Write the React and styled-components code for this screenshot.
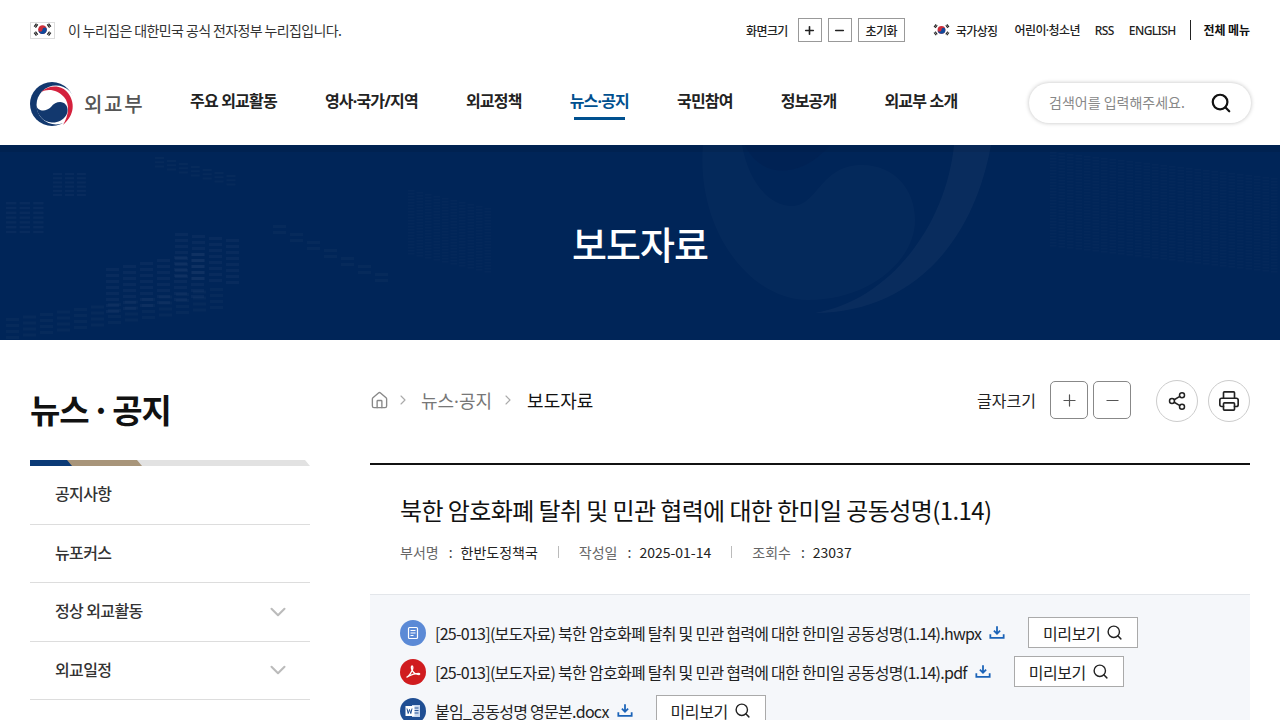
import styled, { createGlobalStyle } from "styled-components";
import { ChevronDown, ChevronRight, House, Minus, Plus, Printer, Search, Share2 } from "lucide-react";

const GlobalStyle = createGlobalStyle`
  html, body {
    margin: 0;
    height: 720px;
    overflow: hidden;
    background: #fff;
    color: #111;
    font-family: "Noto Sans CJK KR", "Noto Sans", sans-serif;
  }
  * { box-sizing: border-box; }
`;

// the middle dot in these labels is the narrow latin one
const narrowDot = `"Noto Sans", "Noto Sans CJK KR", sans-serif`;

const utilLinks = ["어린이·청소년", "RSS", "ENGLISH"];
const navItems = ["주요 외교활동", "영사·국가/지역", "외교정책", "뉴스·공지", "국민참여", "정보공개", "외교부 소개"];
const sideItems = [
  { label: "공지사항" },
  { label: "뉴포커스" },
  { label: "정상 외교활동", more: true },
  { label: "외교일정", more: true },
];
const files = [
  { kind: "hwp", name: "[25-013](보도자료) 북한 암호화폐 탈취 및 민관 협력에 대한 한미일 공동성명(1.14).hwpx" },
  { kind: "pdf", name: "[25-013](보도자료) 북한 암호화폐 탈취 및 민관 협력에 대한 한미일 공동성명(1.14).pdf" },
  { kind: "doc", name: "붙임_공동성명 영문본.docx" },
];

// dash patches of the hero backdrop: x, y, columns, rows, slant, size, strength
const patches = [
  [6, 202, 3, 7, 0, 0.8, 0.03], [53, 173, 3, 6, 0, 0.7, 0.03], [155, 157, 7, 3, 3, 0.7, 0.025],
  [175, 233, 4, 8, 2, 1, 0.03], [106, 268, 6, 8, -3, 1, 0.03], [6, 318, 13, 4, -2.5, 1, 0.025],
  [273, 225, 7, 2, 8, 1, 0.025], [408, 190, 10, 22, 2, 0.5, 0.015], [1050, 152, 27, 32, 1, 0.5, 0.016],
];

function HeroDashes() {
  return patches.map(([x, y, cols, rows, slant, size, strength], p) =>
    Array.from({ length: cols * rows }, (_, i) => {
      const col = i % cols;
      const row = Math.floor(i / cols);
      return (
        <rect
          key={`${p}-${i}`}
          x={x + col * 17 * size}
          y={y + row * 6 * size + col * slant}
          width={13 * size}
          height={3 * size}
          fill="#fff"
          opacity={strength}
        />
      );
    }),
  );
}

function HeroArt() {
  return (
    <HeroSvg viewBox="0 0 1280 195" aria-hidden="true">
      <g transform="translate(0 -145)">
        <HeroDashes />
        <rect y="145" width="1280" height="7" fill="#001f4a" opacity="0.5" />
        <path d="M815 313C905 313 972 250 991 145H954C946 225 890 300 815 313Z" fill="#fff" opacity="0.035" />
        <path d="M703 145C696 230 750 300 808 300C870 300 915 260 915 220C915 190 895 165 862 165C820 165 818 206 792 206C768 206 748 180 742 145Z" fill="#fff" opacity="0.016" stroke="#fff" strokeOpacity="0.03" />
        <path d="M745 145C760 178 800 180 830 145Z" fill="#001e4d" opacity="0.35" />
      </g>
    </HeroSvg>
  );
}

function Flag({ width = 17 }) {
  return (
    <svg width={width} height={width * 0.8} viewBox="0 0 20 16" aria-hidden="true">
      <circle cx="10" cy="8" r="4.600" fill="#cd2e3a" />
      <path d="M5.400 8a2.300 2.300 0 0 0 4.600 0 2.300 2.300 0 0 1 4.600 0 4.600 4.600 0 0 1-9.200 0Z" fill="#0f4a9c" />
      <path
        d="M3.600 1.600 1.200 4.800M5 2.600 2.600 5.800M16.400 1.600l2.400 3.200M15 2.600l2.400 3.200M3.600 14.400 1.200 11.200M5 13.400 2.600 10.200M16.400 14.400l2.400-3.200M15 13.400l2.400-3.200"
        stroke="#222"
        strokeWidth="1.300"
      />
    </svg>
  );
}

function Logo() {
  return (
    <svg width="46" height="46" viewBox="0 0 46 46" aria-hidden="true">
      <circle cx="22" cy="23" r="22" fill="#12386e" />
      <circle cx="26" cy="24" r="19.500" fill="#fff" />
      <path d="M11 11C20 3 32 4 38 12C45 21 45 34 33 44C39 34 40 23 34 16C28 9 18 7 11 11Z" fill="#d4213d" />
      <path d="M6 24C8 31 16 31 21 26C25 21 32 19 36 24C41 31 34 42 22 41.500C13 41 7 34 6 24Z" fill="#12386e" />
    </svg>
  );
}

function DownloadIcon() {
  return (
    <DownIcon viewBox="0 0 18 16" aria-hidden="true">
      <path d="M9 1v8M5.500 6 9 9.500 12.500 6" fill="none" stroke="#1a63b8" strokeWidth="2" />
      <path d="M1.500 10v4h15v-4" fill="none" stroke="#1a63b8" strokeWidth="2" />
    </DownIcon>
  );
}

function FileBadge({ kind }) {
  return (
    <FileCircle $kind={kind}>
      <svg width="26" height="26" viewBox="0 0 26 26" aria-hidden="true">
        {kind === "hwp" && (
          <g fill="none" stroke="#fff" strokeWidth="1.200">
            <rect x="8.500" y="7.500" width="9" height="11" rx="1" />
            <path d="M10.500 10.500h5M10.500 13h5M10.500 15.500h3" />
          </g>
        )}
        {kind === "pdf" && (
          <path d="M7 18c2-1 4-4 5.500-7.500.6-1.600.4-3.500-.4-3.500-1 0-1 2.500.2 4.500 1.300 2.300 3.500 4 6.700 4 1 0 1-1-.5-1-3 0-7 1-9.500 2.500-1.200.7-2.500 1.200-2 1Z" fill="none" stroke="#fff" strokeWidth="1.300" />
        )}
        {kind === "doc" && (
          <g>
            <rect x="12" y="7" width="8" height="12" fill="#c9d8ef" />
            <path d="M13.500 10h5M13.500 12.500h5M13.500 15h5" stroke="#2b5797" />
            <rect x="5.500" y="8" width="9" height="10" fill="#fff" />
            <path d="m7 10.500 1.200 5 1.300-4 1.300 4 1.200-5" fill="none" stroke="#1f4e93" strokeWidth="1" />
          </g>
        )}
      </svg>
    </FileCircle>
  );
}

export default function App() {
  return (
    <>
      <GlobalStyle />
      <TopBar>
        <Notice>
          <FlagFrame>
            <Flag width={19} />
          </FlagFrame>
          이 누리집은 대한민국 공식 전자정부 누리집입니다.
        </Notice>
        <Utilities>
          <ZoomLabel>화면크기</ZoomLabel>
          <TinyButton aria-label="확대"><Plus size={13} strokeWidth={3} /></TinyButton>
          <TinyButton aria-label="축소"><Minus size={13} strokeWidth={3} /></TinyButton>
          <ResetButton>초기화</ResetButton>
          <SymbolLink>
            <Flag />
            국가상징
          </SymbolLink>
          {utilLinks.map((link) => (
            <UtilLink key={link}>{link}</UtilLink>
          ))}
          <AllMenu>전체 메뉴</AllMenu>
        </Utilities>
      </TopBar>

      <Header>
        <Brand>
          <Logo />
          <BrandName>외교부</BrandName>
        </Brand>
        <Nav>
          {navItems.map((item) => (
            <NavItem key={item} $active={item === "뉴스·공지"}>{item}</NavItem>
          ))}
        </Nav>
        <SearchBox>
          <SearchText>검색어를 입력해주세요.</SearchText>
          <Search size={22} strokeWidth={2.4} color="#111" />
        </SearchBox>
      </Header>

      <Hero>
        <HeroArt />
        <HeroTitle>보도자료</HeroTitle>
      </Hero>

      <Body>
        <Sidebar>
          <SideTitle>뉴스 · 공지</SideTitle>
          <SideBand>
            <BandPart $width={280} $color="#e2e2e2" />
            <BandPart $width={112} $color="#a8957a" />
            <BandPart $width={42} $color="#0b3a76" />
          </SideBand>
          <SideList>
            {sideItems.map((item) => (
              <SideItem key={item.label}>
                <span>{item.label}</span>
                {item.more && <ChevronDown size={26} color="#bbb" strokeWidth={1.9} />}
              </SideItem>
            ))}
          </SideList>
        </Sidebar>

        <Main>
          <Toolbar>
            <Crumbs>
              <House size={19} color="#888" strokeWidth={1.7} />
              <ChevronRight size={16} color="#aaa" strokeWidth={1.7} />
              <CrumbLink>뉴스·공지</CrumbLink>
              <ChevronRight size={16} color="#aaa" strokeWidth={1.7} />
              <CrumbCurrent>보도자료</CrumbCurrent>
            </Crumbs>
            <Tools>
              <FontLabel>글자크기</FontLabel>
              <FontButton aria-label="글자 확대"><Plus size={19} strokeWidth={1.5} color="#555" /></FontButton>
              <FontButton aria-label="글자 축소"><Minus size={19} strokeWidth={1.5} color="#555" /></FontButton>
              <RoundButton aria-label="공유"><Share2 size={20} strokeWidth={1.8} color="#222" /></RoundButton>
              <RoundButton aria-label="인쇄"><Printer size={22} strokeWidth={1.8} color="#222" /></RoundButton>
            </Tools>
          </Toolbar>

          <Article>
            <ArticleHead>
              <ArticleTitle>북한 암호화폐 탈취 및 민관 협력에 대한 한미일 공동성명(1.14)</ArticleTitle>
              <Meta>
                <MetaItem><MetaKey>부서명</MetaKey><MetaColon>:</MetaColon>한반도정책국</MetaItem>
                <MetaItem><MetaKey>작성일</MetaKey><MetaColon>:</MetaColon>2025-01-14</MetaItem>
                <MetaItem><MetaKey>조회수</MetaKey><MetaColon>:</MetaColon>23037</MetaItem>
              </Meta>
            </ArticleHead>
            <FilePanel>
              {files.map((file) => (
                <FileRow key={file.kind}>
                  <FileBadge kind={file.kind} />
                  <FileName>{file.name}</FileName>
                  <DownloadIcon />
                  <PreviewButton>
                    미리보기
                    <Search size={17} strokeWidth={2} color="#222" />
                  </PreviewButton>
                </FileRow>
              ))}
            </FilePanel>
          </Article>
        </Main>
      </Body>
    </>
  );
}

const TopBar = styled.div`
  display: flex;
  align-items: center;
  justify-content: space-between;
  height: 60px;
  padding: 0 30px;
`;

const Notice = styled.div`
  display: flex;
  align-items: center;
  gap: 13px;
  font-size: 14px;
  letter-spacing: -0.62px;
  color: #333;
`;

const FlagFrame = styled.span`
  display: flex;
  align-items: center;
  justify-content: center;
  width: 25px;
  height: 17px;
  border: 1px solid #ddd;
`;

const Utilities = styled.div`
  display: flex;
  align-items: center;
  font-size: 12px;
  letter-spacing: -0.6px;
  font-weight: 500;
  color: #222;
`;

const ZoomLabel = styled.span`
  margin-right: 10px;
`;

const TinyButton = styled.button`
  display: flex;
  align-items: center;
  justify-content: center;
  width: 24px;
  height: 24px;
  margin-right: 6px;
  padding: 0;
  background: #fff;
  border: 1px solid #999;
  color: #222;
`;

const ResetButton = styled.button`
  width: 47px;
  height: 24px;
  padding: 0;
  background: #fff;
  border: 1px solid #999;
  font: inherit;
  letter-spacing: inherit;
  color: inherit;
`;

const SymbolLink = styled.a`
  display: flex;
  align-items: center;
  gap: 6px;
  margin: 0 2px 0 28px;
`;

const UtilLink = styled.a`
  margin-left: 15px;
  font-family: ${narrowDot};
`;

const AllMenu = styled.a`
  margin-left: 14px;
  padding-left: 13px;
  border-left: 1px solid #222;
  line-height: 20px;
  font-weight: 700;
  letter-spacing: -0.1px;
  color: #111;
`;

const Header = styled.header`
  display: flex;
  align-items: center;
  height: 85px;
  padding: 0 29px 0 30px;
`;

const Brand = styled.div`
  display: flex;
  align-items: center;
  gap: 8px;
  width: 160px;
  margin-top: 2px;
`;

const BrandName = styled.span`
  font-size: 20px;
  font-weight: 500;
  letter-spacing: 1.7px;
  color: #555;
`;

const Nav = styled.nav`
  display: flex;
  gap: 48px;
  flex: 1;
  margin-bottom: 3px;
`;

const NavItem = styled.a`
  position: relative;
  font-family: ${narrowDot};
  font-size: 16px;
  font-weight: 700;
  letter-spacing: -0.8px;
  line-height: 24px;
  color: ${({ $active }) => ($active ? "#00508f" : "#222")};

  &::after {
    content: "";
    display: ${({ $active }) => ($active ? "block" : "none")};
    position: absolute;
    left: 4px;
    right: 4px;
    bottom: -7px;
    height: 3px;
    background: #00508f;
  }
`;

const SearchBox = styled.div`
  display: flex;
  align-items: center;
  justify-content: space-between;
  width: 222px;
  height: 40px;
  padding: 0 19px 0 20px;
  border-radius: 20px;
  background: #fff;
  box-shadow: 0 0 4px rgba(0, 0, 0, 0.25);
`;

const SearchText = styled.span`
  margin-bottom: 1px;
  font-size: 14px;
  color: #888;
`;

const Hero = styled.section`
  position: relative;
  display: flex;
  align-items: center;
  justify-content: center;
  height: 195px;
  background: #002558;
  overflow: hidden;
`;

const HeroSvg = styled.svg`
  position: absolute;
  inset: 0;
  width: 100%;
  height: 100%;
`;

const HeroTitle = styled.h1`
  position: relative;
  margin: 0;
  font-size: 38px;
  font-weight: 500;
  letter-spacing: -1px;
  color: #fff;
`;

const Body = styled.div`
  display: flex;
  gap: 60px;
  padding: 40px 30px 0;
`;

const Sidebar = styled.aside`
  width: 280px;
  flex: none;
`;

const SideTitle = styled.h2`
  margin: 0;
  height: 80px;
  font-size: 33px;
  font-weight: 700;
  line-height: 58px;
  letter-spacing: -1px;
  word-spacing: -4px;
  color: #111;
`;

const SideBand = styled.div`
  display: grid;
  height: 6px;
`;

const BandPart = styled.span`
  grid-area: 1 / 1;
  width: ${({ $width }) => $width}px;
  background: ${({ $color }) => $color};
  clip-path: polygon(0 0, calc(100% - 5px) 0, 100% 100%, 0 100%);
`;

const SideList = styled.ul`
  margin: 0;
  padding: 0;
  list-style: none;
`;

const SideItem = styled.li`
  display: flex;
  align-items: center;
  justify-content: space-between;
  height: 58.5px;
  padding: 0 19px 0 25px;
  border-bottom: 1px solid #ddd;
  font-size: 16px;
  font-weight: 500;
  letter-spacing: -0.6px;
  color: #333;

  span {
    margin-bottom: 3px;
  }
`;

const Main = styled.main`
  flex: 1;
  min-width: 0;
`;

const Toolbar = styled.div`
  display: flex;
  align-items: center;
  justify-content: space-between;
  height: 42px;
`;

const Crumbs = styled.div`
  display: flex;
  align-items: center;
  gap: 6px;
  margin-bottom: 2px;
  font-size: 18px;
`;

const CrumbLink = styled.span`
  margin: 0 2px 0 4px;
  font-family: ${narrowDot};
  color: #777;
`;

const CrumbCurrent = styled.span`
  margin-left: 5px;
  color: #111;
`;

const Tools = styled.div`
  display: flex;
  align-items: center;
  gap: 5px;
`;

const FontLabel = styled.span`
  margin: 0 9px 2px 0;
  font-size: 16px;
  color: #222;
`;

const FontButton = styled.button`
  display: flex;
  align-items: center;
  justify-content: center;
  width: 38px;
  height: 38px;
  margin-top: -2px;
  padding: 0;
  background: #fff;
  border: 1px solid #888;
  border-radius: 5px;
`;

const RoundButton = styled.button`
  display: flex;
  align-items: center;
  justify-content: center;
  width: 42px;
  height: 42px;
  margin-left: 5px;
  padding: 0;
  background: #fff;
  border: 1px solid #ccc;
  border-radius: 50%;

  button + & {
    margin-left: 20px;
  }

  & + & {
    margin-left: 5px;
  }
`;

const Article = styled.article`
  margin-top: 41px;
  border-top: 2px solid #111;
`;

const ArticleHead = styled.div`
  padding: 25px 30px 30px;
`;

const ArticleTitle = styled.h3`
  margin: 0;
  font-size: 24px;
  font-weight: 400;
  line-height: 40px;
  letter-spacing: -0.6px;
  color: #111;
`;

const Meta = styled.div`
  display: flex;
  margin-top: 10px;
  font-size: 14px;
  line-height: 24px;
  color: #222;
`;

const MetaItem = styled.span`
  display: flex;
  align-items: center;

  & + &::before {
    content: "";
    width: 1px;
    height: 12px;
    margin: 0 20px;
    background: #bbb;
  }
`;

const MetaKey = styled.span`
  color: #666;
`;

const MetaColon = styled.span`
  margin: 0 8px 0 10px;
  color: #444;
`;

const FilePanel = styled.div`
  display: flex;
  flex-direction: column;
  gap: 8px;
  padding: 22px 30px;
  border-top: 1px solid #e3e6ea;
  background: #f5f7fa;
`;

const FileRow = styled.div`
  display: flex;
  align-items: center;
  height: 31px;
`;

const FileCircle = styled.span`
  display: flex;
  width: 26px;
  height: 26px;
  margin-right: 9px;
  border-radius: 50%;
  background: ${({ $kind }) =>
    $kind === "hwp" ? "#5b8ad6" : $kind === "pdf" ? "#d01c1f" : "#1f4e93"};
`;

const FileName = styled.span`
  font-size: 16px;
  letter-spacing: -0.73px;
  color: #222;
`;

const DownIcon = styled.svg`
  width: 16px;
  height: 15px;
  margin-left: 8px;
`;

const PreviewButton = styled.button`
  display: flex;
  align-items: center;
  justify-content: center;
  gap: 6px;
  width: 110px;
  height: 31px;
  margin-left: 23px;
  padding: 0;
  background: #fff;
  border: 1px solid #aaa;
  font-family: inherit;
  font-size: 16px;
  letter-spacing: -0.4px;
  color: #222;
`;
